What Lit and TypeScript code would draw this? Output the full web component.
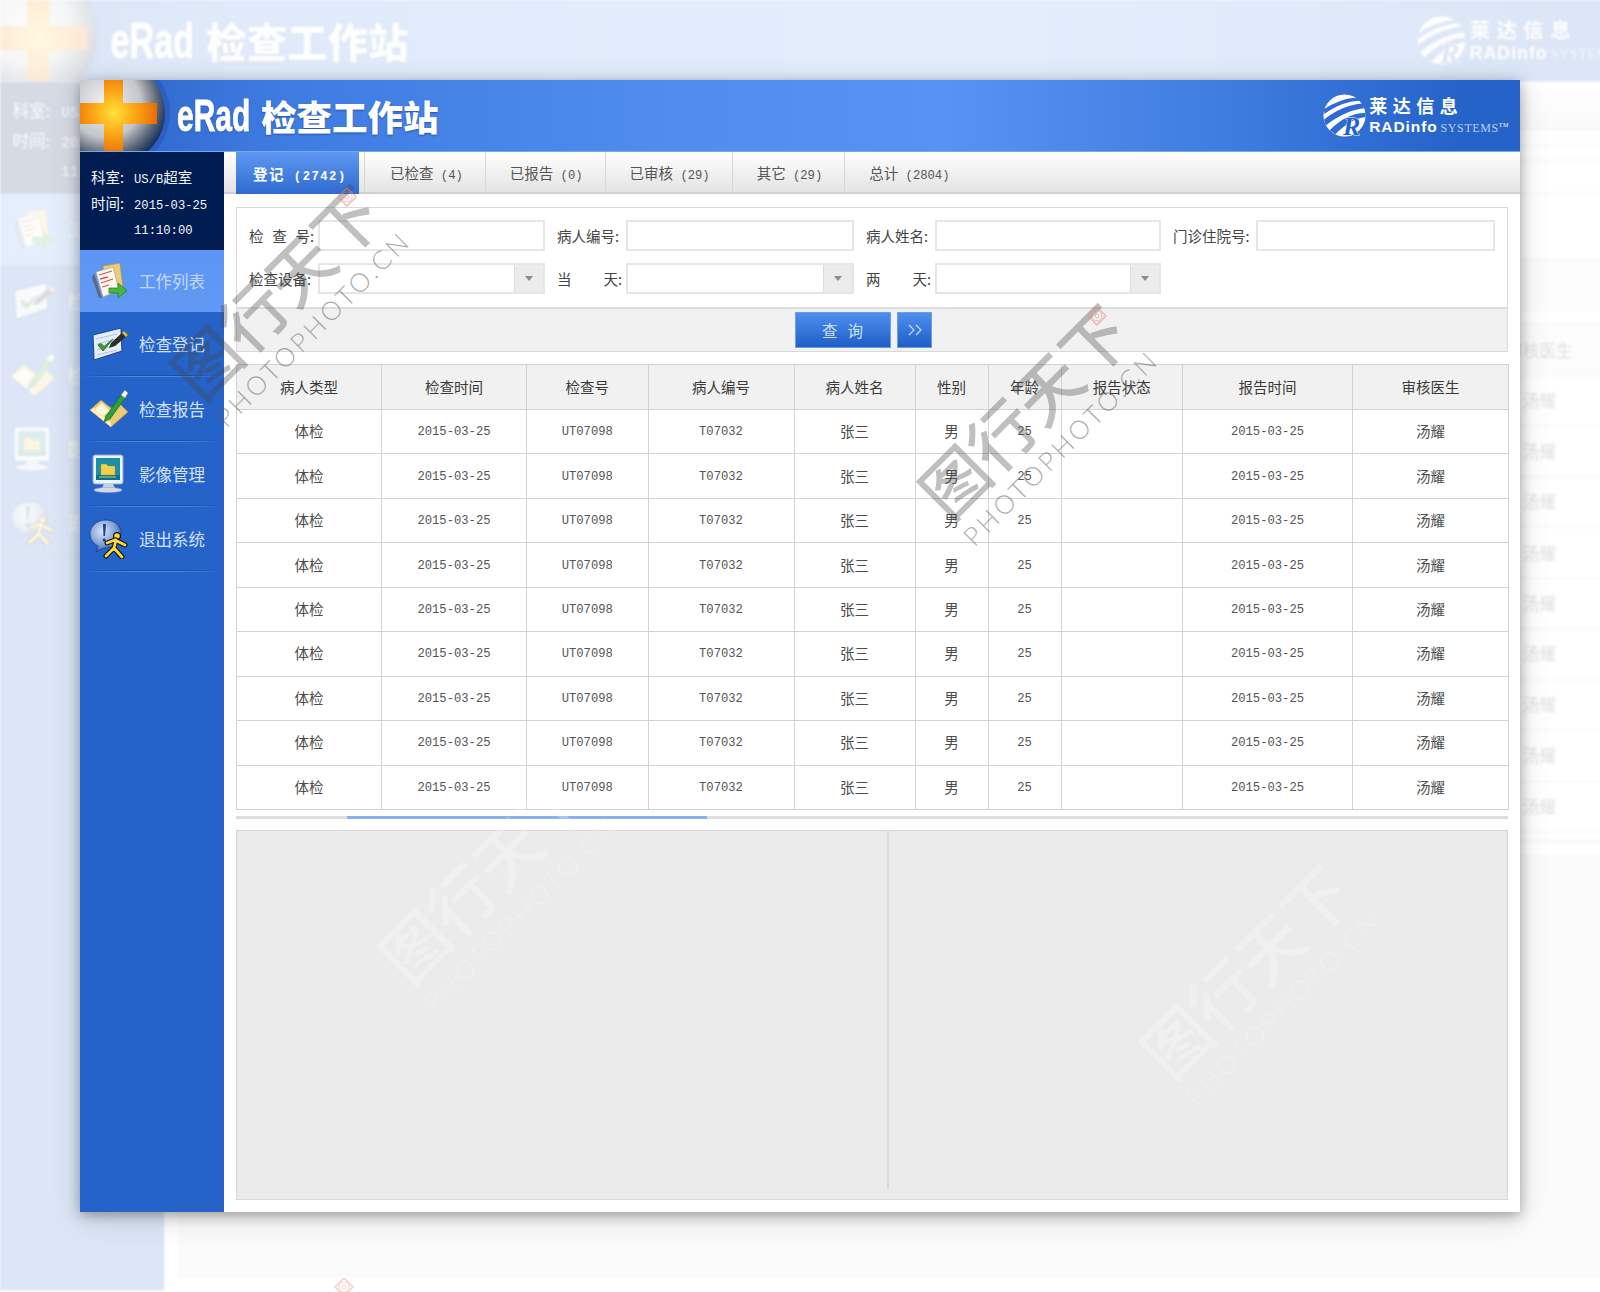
import {LitElement, html, css, svg} from 'lit';
import {customElement} from 'lit/decorators.js';

const tabs = [
  {name: '登记', count: '(2742)'},
  {name: '已检查', count: '(4)'},
  {name: '已报告', count: '(0)'},
  {name: '已审核', count: '(29)'},
  {name: '其它', count: '(29)'},
  {name: '总计', count: '(2804)'},
];

const colWidths = [145, 145, 121.5, 146, 121, 73, 73, 121.5, 170, 156];
const heads = ['病人类型', '检查时间', '检查号', '病人编号', '病人姓名', '性别', '年龄', '报告状态', '报告时间', '审核医生'];
const row = ['体检', '2015-03-25', 'UT07098', 'T07032', '张三', '男', '25', '', '2015-03-25', '汤耀'];
const latinCols = new Set([1, 2, 3, 6, 8]);

const iconList = svg`
  <path d="M14 5 L31 2 L34 27 L16 34 Z" fill="#e9cd7c" stroke="#b08f3e" stroke-width=".7"/>
  <path d="M7 11 L24 6 L30 29 L14 36 Z" fill="#fbf8ef" stroke="#a9a48f" stroke-width=".7"/>
  <path d="M10 14 L23 10 M11 18 L19 16 M12 22 L24 18 M13 26 L20 24" stroke="#cf5a50" stroke-width="1.3"/>
  <path d="M5 12 L13 37 L10 37 L3 17 Z" fill="#5c6a80"/>
  <path d="M20 27 L29 27 L29 22 L38 29.5 L29 37 L29 32 L20 32 Z" fill="#48b83a" stroke="#237a1e" stroke-width=".7"/>
`;
const iconCheck = svg`
  <path d="M4 11 L32 4 L33 27 L5 36 Z" fill="#e4edf8" stroke="#1f4c9c" stroke-width="1.2"/>
  <path d="M7 15 L28 10 M8 20 L28 15 M8 26 L28 21 M8 31 L28 26" stroke="#a9c0e0" stroke-width=".9"/>
  <path d="M9 21 L14 27 L24 15 L15 22.5 L12 19.5 Z" fill="#3f9a2e" stroke="#2e7a20" stroke-width="1"/>
  <path d="M22 19 L35 7 L39 11 L26 22 L20 24 Z" fill="#2c2c2c"/>
  <path d="M34 8 L38 12" stroke="#e6b33c" stroke-width="3"/>
`;
const iconReport = svg`
  <path d="M1 21 L12 11 L22 19 L31 15 L39 23 L22 38 Z" fill="#eccb72" stroke="#a98b45" stroke-width=".7"/>
  <path d="M1 21 L22 38 L22 34 L5 19 Z" fill="#fff0c0"/>
  <path d="M6 20 L13 14 L21 22 L14 27 Z" fill="#fff6dc"/>
  <path d="M17 27 L33 5 L37 8 L21 30 L15 33 Z" fill="#2f9f3c" stroke="#1a6b26" stroke-width=".7"/>
  <path d="M32 6 L36 1 L39 4 L36 9 Z" fill="#f2f5f2" stroke="#7b8b7b" stroke-width=".5"/>
`;
const iconMonitor = svg`
  <rect x="4" y="1" width="30" height="29" rx="2" fill="#eef4fb" stroke="#8ea8c9" stroke-width="1"/>
  <rect x="7" y="4" width="24" height="22" fill="#1c8fa8"/>
  <rect x="7" y="21" width="24" height="5" fill="#0f6f8c"/>
  <path d="M12 10 L17 10 L19 12 L26 12 L26 21 L12 21 Z" fill="#f3cf4d" stroke="#b9922a" stroke-width=".5"/>
  <path d="M10 23 H27" stroke="#7cd06c" stroke-width="1.3"/>
  <path d="M15 30 H24 L26 34 H13 Z" fill="#c6d2e2"/>
  <ellipse cx="19" cy="36" rx="14" ry="2.6" fill="#d4d8ea" stroke="#9aa4c6" stroke-width=".6"/>
`;
const iconExit = svg`
  <defs>
    <radialGradient id="bub" cx=".4" cy=".35" r=".7">
      <stop offset="0" stop-color="#dbe7fb"/><stop offset=".6" stop-color="#7ea0d8"/><stop offset="1" stop-color="#2b4f98"/>
    </radialGradient>
  </defs>
  <path d="M17 1 C7 1 1 8 1 15 C1 21 5 25 9 27 L7 33 L15 29 C24 29 32 23 32 14 C32 7 26 1 17 1 Z" fill="url(#bub)" stroke="#1f3f82" stroke-width=".8"/>
  <path d="M17 5 L16 17 L14.5 17 L14 5 Z" fill="#1f3f82"/>
  <circle cx="15.2" cy="21" r="1.6" fill="#1f3f82"/>
  <circle cx="28" cy="17" r="3.4" fill="#ffd934" stroke="#111" stroke-width="1.2"/>
  <path d="M26 21 L18 24 M26 21 L36 26 M27 21 L25 29 L17 37 M25 29 L33 38" fill="none" stroke="#111" stroke-width="5" stroke-linecap="round"/>
  <path d="M26 21 L18 24 M26 21 L36 26 M27 21 L25 29 L17 37 M25 29 L33 38" fill="none" stroke="#ffd934" stroke-width="2.8" stroke-linecap="round"/>
`;

const menu = [
  {label: '工作列表', icon: iconList, active: true},
  {label: '检查登记', icon: iconCheck},
  {label: '检查报告', icon: iconReport},
  {label: '影像管理', icon: iconMonitor},
  {label: '退出系统', icon: iconExit},
];

@customElement('erad-window')
export class EradWindow extends LitElement {
  static styles = css`
    :host {
      display: flex;
      flex-direction: column;
      width: 1440px;
      height: 1132px;
      background: #fff;
      font-family: 'Noto Sans CJK SC', 'Liberation Sans', sans-serif;
      font-size: 14.5px;
      color: #444;
    }

    /* header */
    .top {
      flex: none;
      height: 71px;
      display: flex;
      align-items: stretch;
      overflow: hidden;
      color: #fff;
      border-bottom: 1px solid #7aa6ea;
      background: linear-gradient(90deg, #2a62c6 0%, #3f7ce2 14%, #4f8cee 40%, #5793f2 60%, #3f7ce0 80%, #2563c9 96%);
    }
    .ball { flex: none; width: 90px; height: 71px; }
    .title {
      display: flex;
      align-items: center;
      margin-left: 7px;
      font-weight: 900;
      font-size: 35.5px;
      line-height: 1;
      text-shadow: 0 1px 2px rgba(10, 40, 110, .5);
      white-space: nowrap;
    }
    .erad {
      display: inline-block;
      width: 84px;
      font-family: 'Liberation Sans', sans-serif;
      font-size: 44px;
      font-weight: 700;
      -webkit-text-stroke: .9px #fff;
      transform: scaleX(.68);
      transform-origin: 0 50%;
    }
    .brand {
      margin-left: auto;
      display: flex;
      align-items: center;
      gap: 3px;
      padding-right: 11px;
    }
    .brand svg { width: 43px; height: 43px; flex: none; }
    .brand-text { display: flex; flex-direction: column; line-height: 1; }
    .brand-cn { font-size: 18px; font-weight: 700; letter-spacing: 5.5px; height: 22px; }
    .brand-en { display: flex; align-items: baseline; gap: 3px; white-space: nowrap; }
    .brand-en b { font: 700 15.5px 'Liberation Sans', sans-serif; letter-spacing: .9px; }
    .brand-en span {
      font: 12px 'Liberation Serif', serif;
      letter-spacing: .6px;
      color: #b9d0f6;
    }
    .brand-en sup { font-size: 6px; color: #fff; }

    .body { flex: 1; display: flex; min-height: 0; }

    /* sidebar */
    aside { flex: none; width: 144px; background: #2563c9; }
    .info {
      height: 98px;
      box-sizing: border-box;
      padding: 12px 0 0 11px;
      background: #001c50;
      color: #f2f5fb;
      font-size: 14.5px;
      line-height: 25.5px;
    }
    .info .k { display: inline-block; width: 43px; }
    .info .v { font: 12.2px 'Liberation Mono', monospace; }
    .info .t { padding-left: 43px; }
    .item {
      height: 65px;
      box-sizing: border-box;
      display: flex;
      flex-direction: column;
    }
    .item.on {
      height: 62px;
      background: linear-gradient(180deg, #5c95f4, #6199f4);
    }
    .item-row {
      flex: 1;
      display: flex;
      align-items: center;
      gap: 10px;
      padding-left: 9px;
      color: #d3e2fa;
      font-size: 16.5px;
    }
    .item.on .item-row { color: #c3d8f8; }
    .item-row svg { flex: none; width: 40px; height: 40px; }
    .sep {
      flex: none;
      height: 2px;
      background:
        linear-gradient(90deg, rgba(37, 99, 201, 1), rgba(37, 99, 201, 0) 30%, rgba(37, 99, 201, 0) 70%, rgba(37, 99, 201, 1)) ,
        linear-gradient(180deg, #1a4fa8 50%, #4a86e2 50%);
    }

    /* content */
    main {
      flex: 1;
      min-width: 0;
      display: flex;
      flex-direction: column;
      padding: 0 12px 12px 12px;
    }
    .tabs {
      flex: none;
      height: 40px;
      display: flex;
      margin: 0 -12px;
      padding-left: 12px;
      border-bottom: 2px solid #cfcfcf;
      background: linear-gradient(180deg, #fff, #e3e3e3);
      white-space: nowrap;
    }
    .tab {
      display: flex;
      align-items: center;
      padding: 0 22px 0 24px;
      border-left: 1px solid #d8d8d8;
      color: #555;
    }
    .tab:nth-child(2) { margin-left: 5px; padding-left: 25px; }
    .tab.on {
      width: 123px;
      box-sizing: border-box;
      padding: 0 0 0 17px;
      border: 0;
      margin-bottom: -2px;
      color: #fff;
      font-weight: 700;
      letter-spacing: 1.5px;
      background: linear-gradient(180deg, #5f98f1, #2e6bd0);
    }
    .num { font: 12.2px 'Liberation Mono', monospace; white-space: pre; }
    .tab.on .num { font-weight: 700; }

    /* search form */
    .search {
      flex: none;
      margin-top: 13px;
      border: 1px solid #d9d9d9;
    }
    .fields {
      display: grid;
      grid-template-columns: 69px 227px 81px 228px 81px 226px 95px 239px;
      grid-auto-rows: 31px;
      row-gap: 12px;
      padding: 12px 0 13px 12px;
    }
    .lb {
      display: flex;
      justify-content: space-between;
      align-items: center;
      padding-right: 4px;
      color: #444;
      white-space: nowrap;
    }
    .lb.offset { margin-left: 12px; }
    .box {
      display: flex;
      box-sizing: border-box;
      border: 2px solid #e6e6e6;
      background: #fff;
    }
    .arrow {
      margin-left: auto;
      width: 28px;
      display: flex;
      align-items: center;
      justify-content: center;
      border-left: 1px solid #dcdcdc;
      background: #ececec;
    }
    .arrow i {
      border: 4.5px solid transparent;
      border-top: 5px solid #8c8c8c;
      border-bottom: 0;
    }
    .actions {
      height: 44px;
      box-sizing: border-box;
      padding: 3px 17px 0 0;
      display: flex;
      justify-content: center;
      gap: 6px;
      border-top: 2px solid #dcdcdc;
      background: #f1f1f1;
    }
    button {
      height: 36px;
      padding: 0;
      border: 1px solid #6d9de6;
      background: linear-gradient(180deg, #4f8fef, #1f5ec6);
      color: #cfe0fb;
      font: inherit;
      font-size: 15.5px;
    }
    button.go { width: 96px; white-space: pre; letter-spacing: 1px; }
    button.more { width: 35px; }
    button svg { display: block; margin: auto; }

    /* table */
    table {
      flex: none;
      margin-top: 12px;
      width: 1272px;
      table-layout: fixed;
      border-collapse: collapse;
    }
    th, td {
      padding: 0;
      border: 1px solid #d2d2d2;
      text-align: center;
      vertical-align: middle;
      overflow: hidden;
      white-space: nowrap;
      line-height: 20px;
    }
    th { height: 44px; background: #f1f1f1; font-weight: 400; color: #3a3a3a; }
    td { height: 42.44px; padding-bottom: 1px; color: #4c4c4c; }
    td.lat {
      padding: 1px 0 0;
      font: 12.2px/20px 'Liberation Mono', monospace;
      color: #555;
    }

    /* splitter and lower panels */
    .split {
      flex: none;
      height: 3px;
      margin-top: 6px;
      background: #dedede;
      display: flex;
    }
    .split i { margin-left: 111px; width: 360px; background: #8ab2ee; }
    .panes {
      flex: 1;
      min-height: 0;
      margin-top: 11px;
      display: grid;
      grid-template-columns: 652px 1fr;
      border: 1px solid #d6d6d6;
      background: #ebebeb;
    }
    .pane-l { border-right: 2px solid #dcdcdc; margin-bottom: 10px; }
  `;

  private label(parts: string[], offset = false) {
    return html`<div class="lb ${offset ? 'offset' : ''}">${parts.map((p) => html`<span>${p}</span>`)}</div>`;
  }

  private input(select = false) {
    return html`<div class="box">${select ? html`<div class="arrow"><i></i></div>` : ''}</div>`;
  }

  render() {
    return html`
      <header class="top">
        <svg class="ball" viewBox="0 0 90 71">
          <defs>
            <radialGradient id="metal" cx=".42" cy=".4" r=".62">
              <stop offset="0" stop-color="#f4f4f4"/>
              <stop offset=".55" stop-color="#c3c6cb"/>
              <stop offset=".82" stop-color="#5c6675"/>
              <stop offset="1" stop-color="#15305f"/>
            </radialGradient>
            <radialGradient id="fire" gradientUnits="userSpaceOnUse" cx="34" cy="33" r="44">
              <stop offset="0" stop-color="#ffe23a"/>
              <stop offset=".4" stop-color="#ffb01c"/>
              <stop offset="1" stop-color="#e86a00"/>
            </radialGradient>
          </defs>
          <circle cx="34" cy="33" r="56" fill="#1f56b8" opacity=".55"/>
          <circle cx="34" cy="33" r="51" fill="url(#metal)"/>
          <path d="M24 -2 H43 V23 H77 V44 H43 V73 H24 V44 H-2 V23 H24 Z" fill="url(#fire)"/>
        </svg>
        <div class="title"><span class="erad">eRad</span>检查工作站</div>
        <div class="brand">
          <svg viewBox="0 0 45 45">
            <circle cx="22.5" cy="22.5" r="22" fill="#fff"/>
            <path d="M1 16 C12 9 24 4 36 4 L39 7 C26 7 12 13 1.5 21 Z M1 27 C12 18 26 11 42 10 L43 15 C30 16 14 24 3 33 Z M7 38 C17 28 29 20 44.5 20 L44.5 24 C33 25 22 33 13 42 Z" fill="#2f6bd2"/>
            <text x="21" y="43" font-family="Liberation Serif, serif" font-size="27" font-weight="700" font-style="italic" fill="#2563c9" stroke="#fff" stroke-width=".8" paint-order="stroke">R</text>
          </svg>
          <div class="brand-text">
            <div class="brand-cn">莱达信息</div>
            <div class="brand-en"><b>RADinfo</b><span>SYSTEMS<sup>TM</sup></span></div>
          </div>
        </div>
      </header>

      <div class="body">
        <aside>
          <div class="info">
            <div><span class="k">科室:</span><span class="v">US/B</span>超室</div>
            <div><span class="k">时间:</span><span class="v">2015-03-25</span></div>
            <div class="t"><span class="v">11:10:00</span></div>
          </div>
          ${menu.map(
            (m) => html`
              <div class="item ${m.active ? 'on' : ''}">
                <div class="item-row">
                  <svg viewBox="0 0 40 40">${m.icon}</svg>
                  <span>${m.label}</span>
                </div>
                ${m.active ? '' : html`<div class="sep"></div>`}
              </div>
            `
          )}
        </aside>

        <main>
          <nav class="tabs">
            ${tabs.map(
              (t, i) => html`<div class="tab ${i === 0 ? 'on' : ''}"><span>${t.name}<span class="num"> ${t.count}</span></span></div>`
            )}
          </nav>

          <section class="search">
            <div class="fields">
              ${this.label(['检', '查', '号:'])}${this.input()}
              ${this.label(['病人编号:'], true)}${this.input()}
              ${this.label(['病人姓名:'], true)}${this.input()}
              ${this.label(['门诊住院号:'], true)}${this.input()}
              ${this.label(['检查设备:'])}${this.input(true)}
              ${this.label(['当', '天:'], true)}${this.input(true)}
              ${this.label(['两', '天:'], true)}${this.input(true)}
            </div>
            <div class="actions">
              <button class="go">查  询</button>
              <button class="more">
                <svg width="16" height="12" viewBox="0 0 16 12" fill="none" stroke="#cfe0fb" stroke-width="1.1">
                  <path d="M2 1 L7 6 L2 11 M9 1 L14 6 L9 11"/>
                </svg>
              </button>
            </div>
          </section>

          <table>
            <colgroup>${colWidths.map((w) => html`<col style="width:${w}px"/>`)}</colgroup>
            <thead><tr>${heads.map((h) => html`<th>${h}</th>`)}</tr></thead>
            <tbody>
              ${Array.from({length: 9}, () => html`
                <tr>${row.map((c, i) => html`<td class=${latinCols.has(i) ? 'lat' : ''}>${c}</td>`)}</tr>
              `)}
            </tbody>
          </table>

          <div class="split"><i></i></div>

          <div class="panes">
            <div class="pane-l"></div>
            <div></div>
          </div>
        </main>
      </div>
    `;
  }
}

const marks = [
  {x: 287, y: 303, ink: 'rgba(70,70,70,.34)', line: 'rgba(90,90,90,.5)'},
  {x: 1035, y: 422, ink: 'rgba(70,70,70,.34)', line: 'rgba(90,90,90,.5)'},
  {x: 495, y: 887, ink: 'rgba(255,255,255,.26)', line: 'rgba(255,255,255,.26)'},
  {x: 1257, y: 982, ink: 'rgba(255,255,255,.26)', line: 'rgba(255,255,255,.26)'},
];
const stamps = [
  {x: 347, y: 197, o: 0.55},
  {x: 1097, y: 316, o: 0.55},
  {x: 344, y: 1287, o: 0.4},
];

@customElement('app-root')
export class AppRoot extends LitElement {
  static styles = css`
    :host { display: block; width: 1600px; height: 1292px; }
    .stage {
      position: relative;
      display: grid;
      width: 1600px;
      height: 1292px;
      overflow: hidden;
      background: #fff;
    }
    .ghost, .front { grid-area: 1 / 1; justify-self: start; align-self: start; }
    .ghost {
      z-index: 0;
      transform: scale(1.14);
      transform-origin: 0 0;
      opacity: .155;
      filter: blur(1px);
    }
    .front {
      z-index: 1;
      margin: 80px 0 0 80px;
      box-shadow: 0 3px 12px rgba(0, 0, 0, .32), 0 6px 30px rgba(0, 0, 0, .14);
    }
    .mark {
      position: absolute;
      z-index: 2;
      width: 300px;
      height: 110px;
      margin: -55px 0 0 -150px;
      transform: rotate(-45deg);
      display: flex;
      flex-direction: column;
      align-items: center;
      pointer-events: none;
      white-space: nowrap;
    }
    .mark b {
      font: 500 66px/74px 'Noto Sans CJK SC', sans-serif;
    }
    .mark span {
      font: 300 26px/34px 'Lato', sans-serif;
      letter-spacing: 3.4px;
    }
    .stamp { position: absolute; z-index: 2; margin: -11px 0 0 -11px; pointer-events: none; }
  `;

  render() {
    return html`
      <div class="stage">
        <erad-window class="ghost"></erad-window>
        <erad-window class="front"></erad-window>
        ${marks.map(
          (m) => html`
            <div class="mark" style="left:${m.x}px;top:${m.y}px">
              <b style="color:${m.ink}">图行天下</b>
              <span style="color:${m.line}">PHOTOPHOTO.CN</span>
            </div>
          `
        )}
        ${stamps.map(
          (s) => html`
            <svg class="stamp" style="left:${s.x}px;top:${s.y}px;opacity:${s.o}" width="22" height="22" viewBox="0 0 22 22" fill="none" stroke="#e88a8a">
              <path d="M11 2 L20 11 L11 20 L2 11 Z" stroke-linejoin="round" stroke-width="1.6"/>
              <circle cx="11" cy="11" r="5"/>
              <circle cx="11" cy="11" r="2"/>
            </svg>
          `
        )}
      </div>
    `;
  }
}
